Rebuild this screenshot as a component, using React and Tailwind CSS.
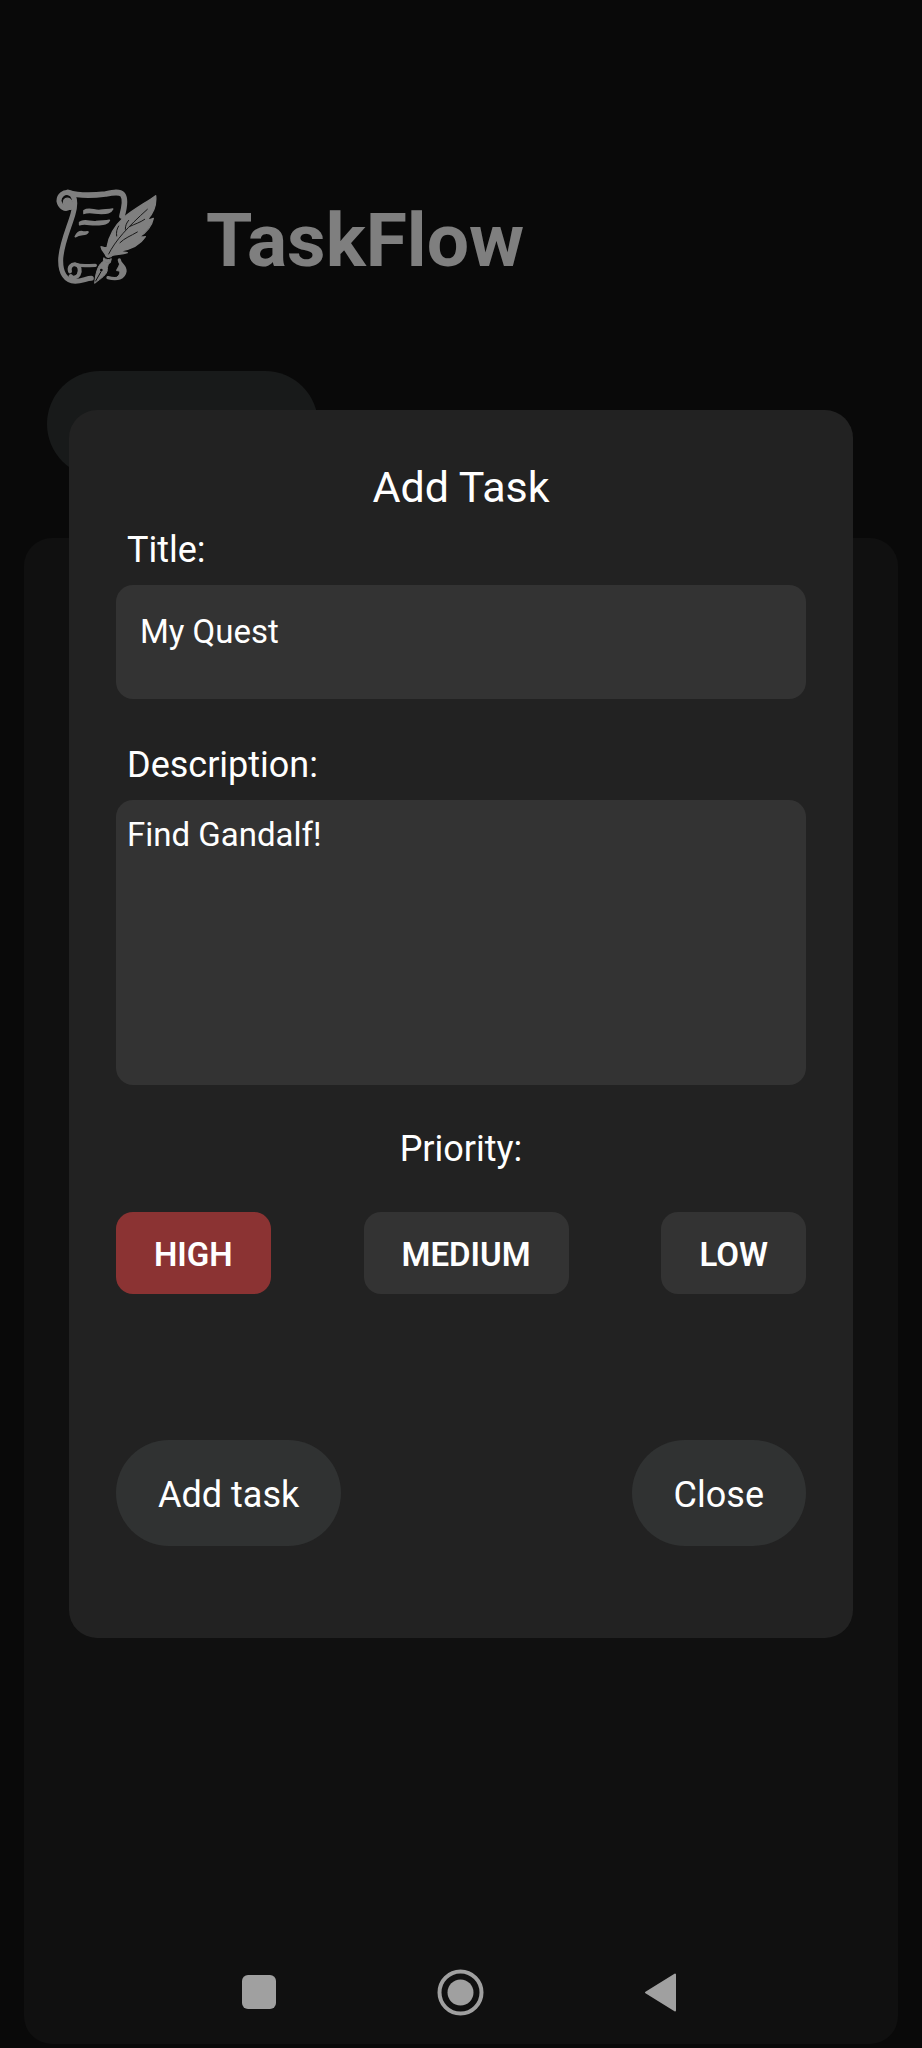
import { useState } from "react";

function QuestLogo() {
  return (
    <svg
      viewBox="48 48 306 324"
      className="h-[108px] w-[102px] shrink-0"
      fill="none"
      stroke="#fff"
      strokeLinecap="round"
      strokeLinejoin="round"
      aria-hidden="true"
    >
      <path d="M84 67C116 78 156 77 196 72C220 67 238 63 248 74C257 86 254 110 246 138" strokeWidth="17" />
      <path d="M90 110C76 122 60 110 57 94C56 76 72 63 90 69C108 80 107 104 99 132C88 172 62 226 62 272C62 308 76 332 106 334C126 334 140 325 154 325" strokeWidth="15" />
      <path d="M70 98C70 86 80 81 90 87C98 93 100 106 95 117C82 120 72 112 70 98Z" fill="#fff" strokeWidth="4" />
      <path d="M90 304C86 292 94 282 106 283C120 286 122 302 116 314C110 324 98 326 92 318" strokeWidth="12" />
      <path d="M108 284C128 290 146 286 166 286" strokeWidth="10" />
      <path d="M238 270C238 282 256 288 255 304C252 324 232 330 204 323" strokeWidth="10" />
      <path d="M238 268C244 286 230 294 230 302C240 300 244 312 232 320C250 322 258 310 255 298C250 286 242 280 238 268Z" fill="#fff" strokeWidth="3" />
      <path d="M132 122C148 112 164 124 182 121C196 119 206 120 218 117C212 130 200 130 184 130C164 130 148 124 132 130Z" fill="#fff" strokeWidth="5" />
      <path d="M119 157C134 147 150 157 168 155C184 152 196 154 208 151C202 164 188 163 172 164C152 166 136 158 119 164Z" fill="#fff" strokeWidth="5" />
      <path d="M106 200C112 188 120 183 130 186C136 188 140 184 144 186C138 197 124 190 106 200Z" fill="#fff" strokeWidth="5" />
      <path d="M347 77C318 98 280 118 252 142C226 166 206 200 201 232C194 236 188 230 183 230C187 248 194 244 198 258C202 264 212 262 217 256C230 252 246 254 262 248C254 246 244 246 240 243C274 238 302 222 316 200C308 202 302 201 298 200C320 188 336 166 340 145C334 148 328 149 322 149C340 130 350 106 347 77Z" fill="#fff" strokeWidth="4" />
      <path d="M206 252C226 212 262 172 322 118M230 198C228 186 231 176 236 168M240 218C254 204 272 198 292 186M256 178C256 166 260 158 266 151M268 170C284 162 300 158 314 148" stroke="#303030" strokeWidth="3" />
      <path d="M192 264C198 270 208 270 214 266L211 278C207 279 197 278 191 273Z" fill="#fff" strokeWidth="3" />
      <path d="M190 274C180 280 168 294 164 340C184 324 202 314 202 298C202 290 204 284 208 280C202 280 196 278 190 274Z" fill="#fff" strokeWidth="3" />
      <path d="M167 333L183 305" stroke="#121212" strokeWidth="3" />
      <circle cx="184" cy="300" r="4" fill="#121212" stroke="none" />
    </svg>
  );
}

const priorities = ["HIGH", "MEDIUM", "LOW"];

function AddTaskDialog() {
  const [priority, setPriority] = useState("HIGH");
  return (
    <form
      role="dialog"
      aria-labelledby="dialog-title"
      onSubmit={(e) => e.preventDefault()}
      className="flex w-full flex-col rounded-[28px] bg-[#222222] px-[47px] pt-[49px] pb-[92px] text-white"
    >
      <h2 id="dialog-title" className="text-center text-[43px] leading-[56px]">Add Task</h2>

      <label htmlFor="title" className="mt-[11px] px-[11px] text-[36px] leading-[48px]">Title:</label>
      <input
        id="title"
        defaultValue="My Quest"
        className="mt-[11px] h-[114px] w-full rounded-[17px] bg-[#333333] px-6 pb-[22px] text-[33px] outline-none"
      />

      <label htmlFor="description" className="mt-[42px] px-[11px] text-[36px] leading-[48px]">Description:</label>
      <textarea
        id="description"
        defaultValue="Find Gandalf!"
        className="mt-[11px] h-[285px] w-full resize-none rounded-[17px] bg-[#333333] px-[11px] py-[15px] text-[33px] leading-[40px] outline-none"
      />

      <p id="priority-label" className="mt-10 text-center text-[36px] leading-[48px]">Priority:</p>
      <div role="group" aria-labelledby="priority-label" className="mt-[39px] flex justify-between">
        {priorities.map((name) => (
          <button
            key={name}
            type="button"
            aria-pressed={priority === name}
            onClick={() => setPriority(name)}
            className={`h-[82px] rounded-[17px] px-[38px] pt-[3px] text-[33px] font-semibold ${
              priority === name ? "bg-[#8b3333]" : "bg-[#333333]"
            }`}
          >
            {name}
          </button>
        ))}
      </div>

      <div className="mt-[146px] flex justify-between">
        <button type="submit" className="h-[106px] rounded-full bg-[#303232] px-[42px] pt-[3px] text-[36px]">Add task</button>
        <button type="button" className="h-[106px] rounded-full bg-[#303232] px-[42px] pt-[3px] text-[36px]">Close</button>
      </div>
    </form>
  );
}

export default function App() {
  return (
    <div className="flex min-h-screen flex-col bg-[#121212] font-[Roboto,sans-serif]">
      <header className="flex items-center gap-12 px-14 pt-[186px]">
        <QuestLogo />
        <h1 className="text-[75px] leading-[88px] font-bold text-white">TaskFlow</h1>
      </header>
      <button
        type="button"
        aria-label="New task"
        className="mt-[77px] ml-[47px] h-[106px] w-[271px] rounded-full bg-[#303434]"
      />
      <main className="mx-6 mt-[61px] mb-1 flex-1 rounded-[28px] bg-[#202020]" />

      <div className="fixed inset-0 flex items-center bg-black/50 px-[69px]">
        <AddTaskDialog />
      </div>

      <nav className="fixed inset-x-0 bottom-0 flex h-28 items-center justify-center">
        <button type="button" aria-label="Recent apps" className="flex w-[201px] justify-center">
          <svg viewBox="0 0 48 48" className="size-12" fill="#a0a0a0">
            <rect x="6" y="7" width="34" height="34" rx="6" />
          </svg>
        </button>
        <button type="button" aria-label="Home" className="flex w-[201px] justify-center">
          <svg viewBox="0 0 48 48" className="size-12" fill="#a0a0a0">
            <circle cx="23.500" cy="24.500" r="21" fill="none" stroke="#a0a0a0" strokeWidth="4" />
            <circle cx="23.500" cy="24.500" r="13" />
          </svg>
        </button>
        <button type="button" aria-label="Back" className="flex w-[201px] justify-center">
          <svg viewBox="0 0 48 48" className="size-12" fill="#a0a0a0" stroke="#a0a0a0" strokeWidth="2" strokeLinejoin="round">
            <path d="M8 24.500L37 6.500V42.500Z" />
          </svg>
        </button>
      </nav>
    </div>
  );
}
